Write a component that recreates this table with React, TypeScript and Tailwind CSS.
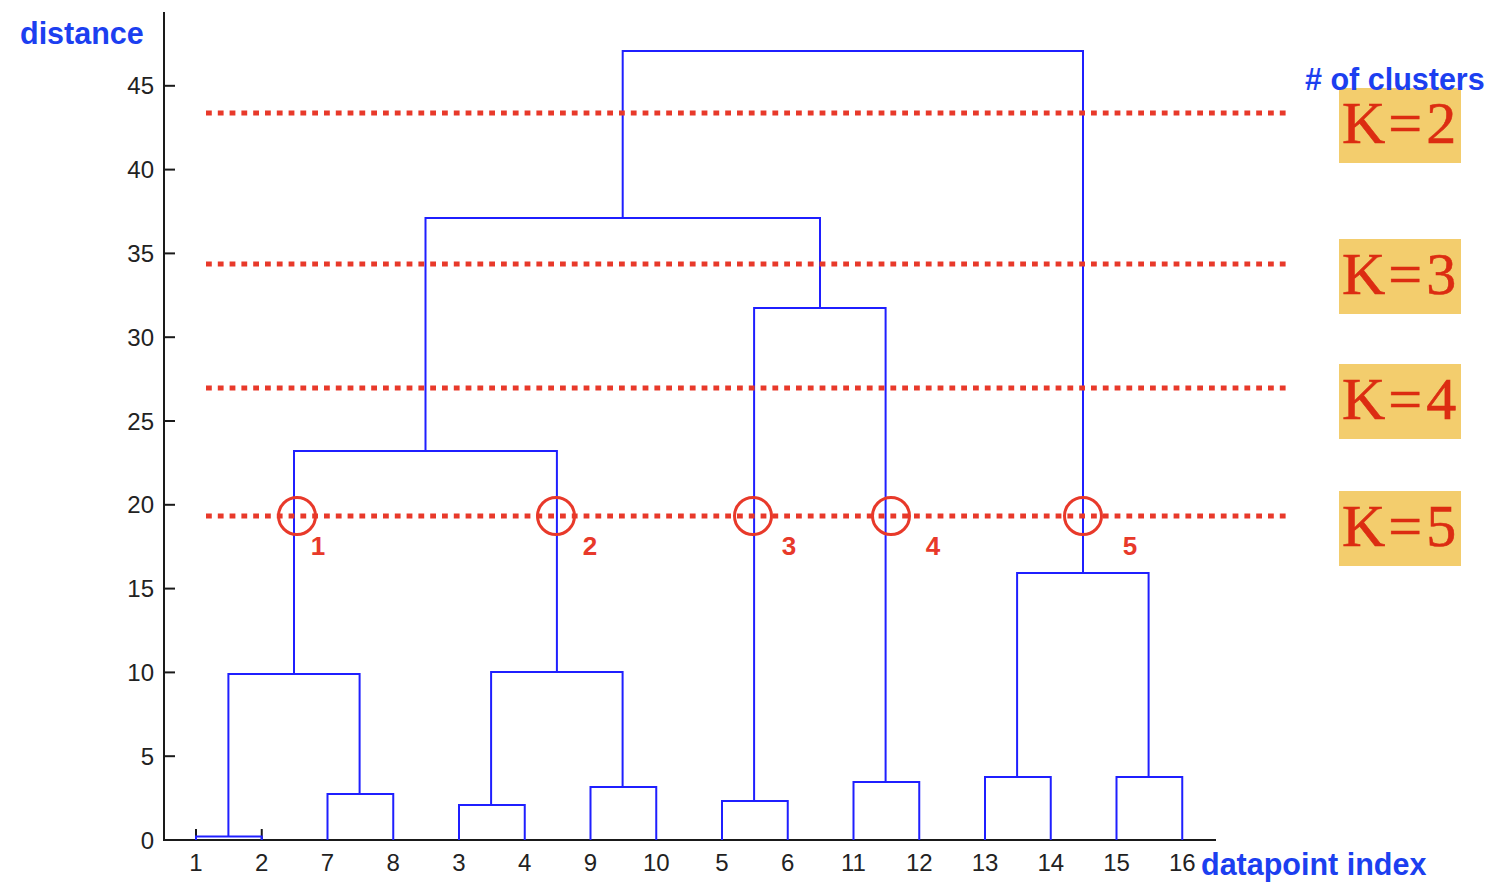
import React from "react";

const AXIS_X = 164;
const BASE_Y = 840;
const UNIT = 16.76;
const leafX = (i: number) => 196 + i * 65.75;
const LEAVES = [1, 2, 7, 8, 3, 4, 9, 10, 5, 6, 11, 12, 13, 14, 15, 16];
const Y_TICKS = [0, 5, 10, 15, 20, 25, 30, 35, 40, 45];

// each link: left child (x, y), right child (x, y), merge height
const LINKS: [number, number, number, number, number][] = [
  [leafX(0), BASE_Y, leafX(1), BASE_Y, 836.5],
  [leafX(2), BASE_Y, leafX(3), BASE_Y, 794],
  [228.4, 836.5, 359.6, 794, 674],
  [leafX(4), BASE_Y, leafX(5), BASE_Y, 805],
  [leafX(6), BASE_Y, leafX(7), BASE_Y, 787],
  [491.1, 805, 622.6, 787, 672],
  [294, 674, 556.9, 672, 451],
  [leafX(8), BASE_Y, leafX(9), BASE_Y, 801],
  [leafX(10), BASE_Y, leafX(11), BASE_Y, 782],
  [754.1, 801, 885.6, 782, 308],
  [425.5, 451, 820, 308, 218],
  [leafX(12), BASE_Y, leafX(13), BASE_Y, 777],
  [leafX(14), BASE_Y, leafX(15), BASE_Y, 777],
  [1017.1, 777, 1148.6, 777, 573],
  [622.7, 218, 1083, 573, 51],
];

const CUT_LINES = [113, 264, 388, 516];
const K_BOXES = [
  { k: 2, y: 88 },
  { k: 3, y: 239 },
  { k: 4, y: 364 },
  { k: 5, y: 491 },
];
const CIRCLES = [
  { cx: 297, label: 318 },
  { cx: 556, label: 590 },
  { cx: 753, label: 789 },
  { cx: 891, label: 933 },
  { cx: 1083, label: 1130 },
];

const App: React.FC = () => {
  return (
    <div className="w-[1502px] h-[896px] bg-white overflow-hidden">
      <svg
        width={1502}
        height={896}
        viewBox="0 0 1502 896"
        className="block font-['Liberation_Sans',Arial,sans-serif]"
      >
        {/* axes */}
        <line x1={AXIS_X} y1={12} x2={AXIS_X} y2={BASE_Y + 1} stroke="#1a1a1a" strokeWidth={2} />
        <line x1={AXIS_X - 1} y1={BASE_Y} x2={1216} y2={BASE_Y} stroke="#1a1a1a" strokeWidth={2} />
        {Y_TICKS.map((t) => {
          const y = BASE_Y - t * UNIT;
          return (
            <g key={t}>
              <line x1={AXIS_X} y1={y} x2={175} y2={y} stroke="#1a1a1a" strokeWidth={2} />
              <text x={154} y={y + 8.5} textAnchor="end" fontSize={24} fill="#222">
                {t}
              </text>
            </g>
          );
        })}
        {LEAVES.map((n, i) => (
          <text key={n} x={leafX(i)} y={870.5} textAnchor="middle" fontSize={24} fill="#222">
            {n}
          </text>
        ))}

        {/* dendrogram */}
        <line x1={leafX(0)} y1={829} x2={leafX(0)} y2={BASE_Y} stroke="#1a1a1a" strokeWidth={2} />
        <line x1={leafX(1)} y1={829} x2={leafX(1)} y2={BASE_Y} stroke="#1a1a1a" strokeWidth={2} />
        {LINKS.map(([x1, y1, x2, y2, h], i) => (
          <path
            key={i}
            d={`M${x1} ${y1} V${h} H${x2} V${y2}`}
            fill="none"
            stroke="#1f1fff"
            strokeWidth={2}
          />
        ))}

        {/* cut lines */}
        {CUT_LINES.map((y) => (
          <line
            key={y}
            x1={206}
            y1={y}
            x2={1290}
            y2={y}
            stroke="#e8392a"
            strokeWidth={5}
            strokeDasharray="5.8 6"
          />
        ))}
        {CIRCLES.map((c, i) => (
          <g key={i}>
            <circle cx={c.cx} cy={516} r={18.5} fill="none" stroke="#e8392a" strokeWidth={3} />
            <text x={c.label} y={555} textAnchor="middle" fontSize={26} fontWeight={700} fill="#e8392a">
              {i + 1}
            </text>
          </g>
        ))}

        {/* cluster count boxes */}
        {K_BOXES.map((b) => (
          <g key={b.k}>
            <rect x={1339} y={b.y} width={122} height={75} fill="#f3cd6d" />
            <text
              x={1342}
              y={b.y + 55}
              fontSize={60}
              fill="#dc2c12"
              stroke="#dc2c12"
              strokeWidth={0.6}
              className="font-['Liberation_Serif','Times_New_Roman',serif]"
            >
              K
              <tspan dx={3}>=</tspan>
              <tspan dx={4}>{b.k}</tspan>
            </text>
          </g>
        ))}

        {/* titles */}
        <text x={20} y={44} fontSize={30.5} fontWeight={700} fill="#1c3ff0">
          distance
        </text>
        <text x={1305} y={90} fontSize={30.5} fontWeight={700} fill="#1c3ff0">
          # of clusters
        </text>
        <text x={1201} y={875} fontSize={30.5} fontWeight={700} fill="#1c3ff0">
          datapoint index
        </text>
      </svg>
    </div>
  );
};

export default App;
